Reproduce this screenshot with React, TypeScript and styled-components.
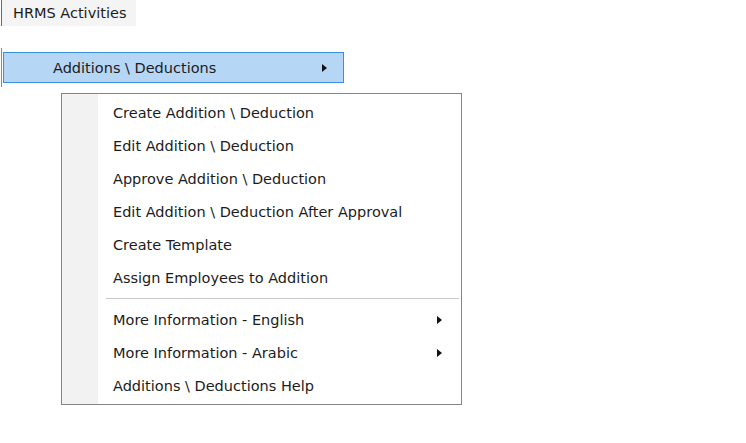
import React from "react";
import styled, { createGlobalStyle } from "styled-components";

const GlobalStyle = createGlobalStyle`
  html, body {
    margin: 0;
    padding: 0;
    background: #ffffff;
    width: 746px;
    height: 443px;
    overflow: hidden;
  }
  body {
    font-family: Tahoma, "DejaVu Sans", "Liberation Sans", sans-serif;
    font-size: 14.5px;
    color: #1c1c1c;
  }
`;

const Page = styled.div`
  display: flex;
  flex-direction: column;
  align-items: flex-start;
`;

const Header = styled.div`
  display: flex;
  align-items: center;
  width: 135px;
  height: 26px;
  margin-left: 1px;
  padding-left: 11px;
  box-sizing: border-box;
  border-left: 1px solid #6b6b6b;
  background: #f4f4f4;
`;

const ActiveRow = styled.div`
  display: flex;
  align-items: center;
  margin-top: 22px;
  margin-left: 1px;
  padding: 4px 0;
  border-left: 1px solid #8a8a8a;
`;

const ActiveItem = styled.div`
  display: flex;
  align-items: center;
  justify-content: space-between;
  width: 341px;
  height: 31px;
  margin-left: 1px;
  box-sizing: border-box;
  padding: 0 16px 0 49px;
  background: #b6d6f6;
  border: 1px solid #3b8fe3;
`;

const Arrow = styled.span`
  width: 0;
  height: 0;
  border-top: 4px solid transparent;
  border-bottom: 4px solid transparent;
  border-left: 5px solid #111;
`;

const Menu = styled.div`
  display: flex;
  flex-direction: column;
  margin-top: 6px;
  margin-left: 61px;
  width: 401px;
  box-sizing: border-box;
  padding: 2px 2px 2px 1px;
  border: 1px solid #858585;
  background: linear-gradient(to right, #f2f2f2 0, #f2f2f2 36px, #ffffff 36px);
`;

const Item = styled.div`
  display: flex;
  align-items: center;
  justify-content: space-between;
  height: 33px;
  padding: 0 17px 0 50px;
`;

const Separator = styled.div`
  height: 9px;
  display: flex;
  align-items: center;
  padding-left: 43px;

  &::after {
    content: "";
    flex: 1;
    height: 1px;
    background: #c8c8c8;
    box-shadow: 0 1px 0 #ffffff;
  }
`;

type MenuEntry = { label: string; sub?: boolean } | "sep";

const entries: MenuEntry[] = [
  { label: "Create Addition \\ Deduction" },
  { label: "Edit Addition \\ Deduction" },
  { label: "Approve Addition \\ Deduction" },
  { label: "Edit Addition \\ Deduction After Approval" },
  { label: "Create Template" },
  { label: "Assign Employees to Addition" },
  "sep",
  { label: "More Information - English", sub: true },
  { label: "More Information - Arabic", sub: true },
  { label: "Additions \\ Deductions Help" },
];

export default function App() {
  return (
    <Page>
      <GlobalStyle />
      <Header>HRMS Activities</Header>
      <ActiveRow>
        <ActiveItem>
          <span>Additions \ Deductions</span>
          <Arrow />
        </ActiveItem>
      </ActiveRow>
      <Menu>
        {entries.map((e, i) =>
          e === "sep" ? (
            <Separator key={i} />
          ) : (
            <Item key={i}>
              <span>{e.label}</span>
              {e.sub && <Arrow />}
            </Item>
          )
        )}
      </Menu>
    </Page>
  );
}
